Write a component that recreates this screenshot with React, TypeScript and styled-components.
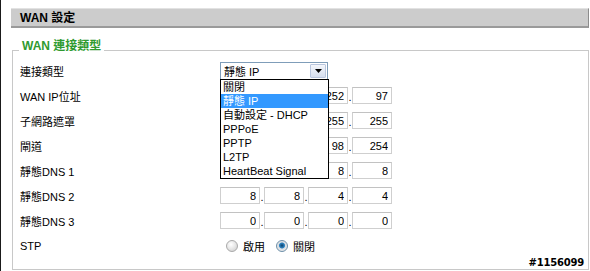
import { Fragment } from 'react';
import styled, { createGlobalStyle } from 'styled-components';

const GlobalStyle = createGlobalStyle`
  html, body {
    margin: 0;
    padding: 0;
    background: #ffffff;
  }
  body {
    font-family: Tahoma, "Liberation Sans", "Noto Sans CJK TC", sans-serif;
    font-size: 11px;
    color: #000;
  }
`;

const Page = styled.div`
  position: relative;
  box-sizing: border-box;
  width: 590px;
  height: 271px;
  padding: 8px 1px 0 11px;
  border-left: 1px solid #1a1a1a;
  overflow: hidden;
`;

const Header = styled.div`
  box-sizing: border-box;
  height: 20px;
  margin-left: -1px;
  padding-left: 9px;
  background: #cccccc;
  border-top: 1px solid #e2e2e2;
  border-bottom: 2px solid #9a9a9a;
  border-right: 1px solid #8c8c8c;
  font-weight: 700;
  font-size: 12px;
  line-height: 18px;
`;

const Fieldset = styled.fieldset`
  margin: 11px 0 0 0;
  padding: 0 0 11px 7px;
  border: 1px solid #c8c8c8;
  min-width: 0;
`;

const Legend = styled.legend`
  padding: 0 3px 8px 3px;
  margin-left: -1px;
  color: #2f9a2f;
  font-weight: 700;
  font-size: 12px;
  line-height: 14px;
`;

const Form = styled.div`
  display: flex;
  flex-direction: column;
  margin-top: -3px;
`;

const Row = styled.div`
  display: flex;
  align-items: center;
  height: 25px;
`;

const Label = styled.div`
  width: 200px;
  flex: none;
`;

const SelectWrap = styled.div`
  position: relative;
`;

const SelectBox = styled.div`
  box-sizing: border-box;
  width: 108px;
  height: 18px;
  display: flex;
  align-items: center;
  justify-content: space-between;
  border: 1px solid #7f9db9;
  background: #fff;
  padding-left: 3px;
`;

const SelectValue = styled.span`
  font-size: 11px;
`;

const ArrowButton = styled.span`
  box-sizing: border-box;
  width: 16px;
  height: 14px;
  margin-right: 1px;
  display: flex;
  align-items: center;
  justify-content: center;
  border: 1px solid #b9c6de;
  border-radius: 1px;
  background: linear-gradient(#f3f6fb, #d5deee);
`;

const ListBox = styled.ul`
  position: absolute;
  top: 17px;
  left: 0;
  z-index: 2;
  box-sizing: border-box;
  width: 109px;
  margin: 0;
  padding: 0;
  list-style: none;
  border: 1px solid #000;
  background: #fff;
`;

const Option = styled.li<{ $selected?: boolean }>`
  height: 14px;
  line-height: 14px;
  padding-left: 2px;
  white-space: nowrap;
  background: ${(p) => (p.$selected ? '#3399ff' : 'transparent')};
  color: ${(p) => (p.$selected ? '#fff' : '#000')};
`;

const IpGroup = styled.div`
  display: flex;
  align-items: flex-end;
`;

const IpBox = styled.input`
  box-sizing: border-box;
  width: 40px;
  height: 17px;
  margin: 0;
  padding: 0 3px 0 0;
  border: 1px solid #cfcfcf;
  border-top-color: #c2c2c2;
  background: #fff;
  font: inherit;
  font-size: 11px;
  text-align: right;
  color: #000;
  outline: none;
`;

const Dot = styled.span`
  width: 4px;
  text-align: center;
  line-height: 14px;
`;

const RadioGroup = styled.div`
  display: flex;
  align-items: center;
  padding-left: 6px;
`;

const RadioItem = styled.label`
  display: flex;
  align-items: center;
  gap: 5px;
  margin-right: 11px;
`;

const RadioDot = styled.span<{ $checked?: boolean }>`
  box-sizing: border-box;
  width: 12px;
  height: 12px;
  border-radius: 50%;
  border: 1px solid ${(p) => (p.$checked ? '#6d8fa8' : '#a9a9a9')};
  background: ${(p) =>
    p.$checked
      ? 'radial-gradient(circle at 50% 45%, #0b3f6a 0, #2f86c4 2.6px, #d9dde2 3.4px, #f4f4f4 100%)'
      : 'radial-gradient(circle at 40% 35%, #ffffff 0, #e6e6e6 50%, #c9c9c9 100%)'};
`;

const Watermark = styled.span`
  position: absolute;
  right: 6px;
  bottom: 3px;
  font-family: "DejaVu Sans", sans-serif;
  font-weight: 700;
  font-size: 10px;
  letter-spacing: -0.2px;
  color: #000;
  text-shadow: 1px 0 0 #fff, -1px 0 0 #fff, 0 1px 0 #fff, 0 -1px 0 #fff;
`;

const options = ['關閉', '靜態 IP', '自動設定 - DHCP', 'PPPoE', 'PPTP', 'L2TP', 'HeartBeat Signal'];

const ipRows = [
  { label: 'WAN IP位址', value: ['61', '219', '252', '97'] },
  { label: '子網路遮罩', value: ['255', '255', '255', '255'] },
  { label: '閘道', value: ['61', '219', '98', '254'] },
  { label: '靜態DNS 1', value: ['8', '8', '8', '8'] },
  { label: '靜態DNS 2', value: ['8', '8', '4', '4'] },
  { label: '靜態DNS 3', value: ['0', '0', '0', '0'] },
];

function IpInput({ value }: { value: string[] }) {
  return (
    <IpGroup>
      {value.map((v, i) => (
        <Fragment key={i}>
          {i > 0 && <Dot>.</Dot>}
          <IpBox value={v} readOnly />
        </Fragment>
      ))}
    </IpGroup>
  );
}

export default function App() {
  return (
    <>
      <GlobalStyle />
      <Page>
        <Header>WAN 設定</Header>
        <Fieldset>
          <Legend>WAN 連接類型</Legend>
          <Form>
            <Row>
              <Label>連接類型</Label>
              <SelectWrap>
                <SelectBox>
                  <SelectValue>靜態 IP</SelectValue>
                  <ArrowButton>
                    <svg width="7" height="4" viewBox="0 0 7 4">
                      <path d="M0 0h7L3.5 4z" fill="#000" />
                    </svg>
                  </ArrowButton>
                </SelectBox>
                <ListBox>
                  {options.map((o) => (
                    <Option key={o} $selected={o === '靜態 IP'}>
                      {o}
                    </Option>
                  ))}
                </ListBox>
              </SelectWrap>
            </Row>
            {ipRows.map((r) => (
              <Row key={r.label}>
                <Label>{r.label}</Label>
                <IpInput value={r.value} />
              </Row>
            ))}
            <Row>
              <Label>STP</Label>
              <RadioGroup>
                <RadioItem>
                  <RadioDot />
                  啟用
                </RadioItem>
                <RadioItem>
                  <RadioDot $checked />
                  關閉
                </RadioItem>
              </RadioGroup>
            </Row>
          </Form>
        </Fieldset>
        <Watermark>#1156099</Watermark>
      </Page>
    </>
  );
}
